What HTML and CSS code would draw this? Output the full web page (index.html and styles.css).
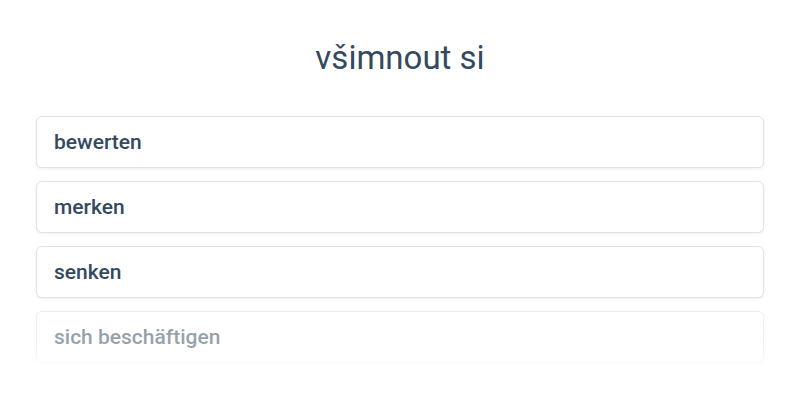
FILE: index.html
```html
<!DOCTYPE html>
<html lang="de">
<head>
<meta charset="utf-8">
<link rel="stylesheet" href="styles.css">
</head>
<body>
<main class="page">
  <h1 class="title">všimnout si</h1>
  <div class="list">
    <div class="card">bewerten</div>
    <div class="card">merken</div>
    <div class="card">senken</div>
    <div class="card">sich beschäftigen</div>
  </div>
</main>
</body>
</html>
```
FILE: styles.css
```css
html, body {
  margin: 0;
  padding: 0;
  background: #ffffff;
}
body {
  font-family: Roboto, "Liberation Sans", sans-serif;
  color: #34495e;
  width: 800px;
  height: 400px;
  overflow: hidden;
}
.page {
  padding: 38px 36px 0;
}
.title {
  margin: 0;
  font-size: 33px;
  line-height: 40px;
  font-weight: 400;
  text-align: center;
  color: #34495e;
}
.list {
  position: relative;
  margin-top: 38px;
  display: flex;
  flex-direction: column;
  gap: 13px;
}
.list::after {
  content: "";
  position: absolute;
  left: -10px;
  right: -10px;
  top: 184px;
  height: 70px;
  background: linear-gradient(to bottom, rgba(255,255,255,0) 0%, rgba(255,255,255,0.45) 25%, rgba(255,255,255,0.5) 70%, rgba(255,255,255,0.85) 88%, #fff 100%);
}
.card {
  height: 52px;
  box-sizing: border-box;
  border: 1px solid #e2e2e2;
  border-radius: 6px;
  box-shadow: 0 1px 3px rgba(0,0,0,0.07);
  background: #fff;
  padding: 0 17px;
  display: flex;
  align-items: center;
  font-size: 21px;
  font-weight: 500;
  color: #34495e;
}
```
